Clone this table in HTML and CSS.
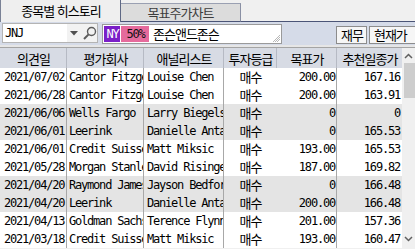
FILE: index.html
```html
<!DOCTYPE html>
<html lang="ko">
<head>
<meta charset="utf-8">
<title>종목별 히스토리</title>
<link rel="stylesheet" href="styles.css">
</head>
<body>
<div class="app">
  <div class="tabs">
    <div class="tab active">종목별 히스토리</div>
    <div class="tab inactive">목표주가차트</div>
    <div class="tab-fill"></div>
  </div>
  <div class="toolbar">
    <div class="combo">
      <span class="combo-input mono">JNJ</span>
      <span class="combo-btn arrow"><svg width="8" height="5" viewBox="0 0 8 5"><polygon points="0,0 8,0 4,4.5" fill="#505050"/></svg></span>
      <span class="combo-btn search"><svg width="15" height="15" viewBox="0 0 15 15"><circle cx="9.5" cy="5.5" r="4" fill="none" stroke="#5c5c5c" stroke-width="1.4"/><line x1="6.6" y1="8.4" x2="2" y2="13" stroke="#5c5c5c" stroke-width="2"/></svg></span>
    </div>
    <div class="name-box">
      <span class="badge ny mono">NY</span>
      <span class="badge pct mono">50%</span>
      <span class="name">존슨앤드존슨</span>
      <svg class="grip" width="8" height="8" viewBox="0 0 8 8"><line x1="8" y1="1" x2="1" y2="8" stroke="#b8b8b8"/><line x1="8" y1="3" x2="3" y2="8" stroke="#b8b8b8"/><line x1="8" y1="5" x2="5" y2="8" stroke="#b8b8b8"/></svg>
    </div>
    <div class="buttons">
      <span class="btn">재무</span>
      <span class="btn wide">현재가</span>
    </div>
  </div>
  <div class="grid-area">
    <div class="table">
      <div class="row head">
        <span class="c c1">의견일</span>
        <span class="c c2">평가회사</span>
        <span class="c c3">애널리스트</span>
        <span class="c c4">투자등급</span>
        <span class="c c5">목표가</span>
        <span class="c c6">추천일종가</span>
      </div>
      <div class="row">
        <span class="c c1 mono">2021/07/02</span><span class="c c2 mono">Cantor Fitzgerald</span><span class="c c3 mono">Louise Chen</span><span class="c c4">매수</span><span class="c c5 mono">200.00</span><span class="c c6 mono">167.16</span>
      </div>
      <div class="row">
        <span class="c c1 mono">2021/06/28</span><span class="c c2 mono">Cantor Fitzgerald</span><span class="c c3 mono">Louise Chen</span><span class="c c4">매수</span><span class="c c5 mono">200.00</span><span class="c c6 mono">163.91</span>
      </div>
      <div class="row alt">
        <span class="c c1 mono">2021/06/06</span><span class="c c2 mono">Wells Fargo</span><span class="c c3 mono">Larry Biegelsen</span><span class="c c4">매수</span><span class="c c5 mono">0</span><span class="c c6 mono">0</span>
      </div>
      <div class="row alt">
        <span class="c c1 mono">2021/06/01</span><span class="c c2 mono">Leerink</span><span class="c c3 mono">Danielle Antalffy</span><span class="c c4">매수</span><span class="c c5 mono">0</span><span class="c c6 mono">165.53</span>
      </div>
      <div class="row">
        <span class="c c1 mono">2021/06/01</span><span class="c c2 mono">Credit Suisse</span><span class="c c3 mono">Matt Miksic</span><span class="c c4">매수</span><span class="c c5 mono">193.00</span><span class="c c6 mono">165.53</span>
      </div>
      <div class="row">
        <span class="c c1 mono">2021/05/28</span><span class="c c2 mono">Morgan Stanley</span><span class="c c3 mono">David Risinger</span><span class="c c4">매수</span><span class="c c5 mono">187.00</span><span class="c c6 mono">169.82</span>
      </div>
      <div class="row alt">
        <span class="c c1 mono">2021/04/20</span><span class="c c2 mono">Raymond James</span><span class="c c3 mono">Jayson Bedford</span><span class="c c4">매수</span><span class="c c5 mono">0</span><span class="c c6 mono">166.48</span>
      </div>
      <div class="row alt">
        <span class="c c1 mono">2021/04/20</span><span class="c c2 mono">Leerink</span><span class="c c3 mono">Danielle Antalffy</span><span class="c c4">매수</span><span class="c c5 mono">200.00</span><span class="c c6 mono">166.48</span>
      </div>
      <div class="row">
        <span class="c c1 mono">2021/04/13</span><span class="c c2 mono">Goldman Sachs</span><span class="c c3 mono">Terence Flynn</span><span class="c c4">매수</span><span class="c c5 mono">201.00</span><span class="c c6 mono">157.36</span>
      </div>
      <div class="row">
        <span class="c c1 mono">2021/03/18</span><span class="c c2 mono">Credit Suisse</span><span class="c c3 mono">Matt Miksic</span><span class="c c4">매수</span><span class="c c5 mono">193.00</span><span class="c c6 mono">160.47</span>
      </div>
    </div>
    <div class="scrollbar">
      <span class="sb-arrow up"><svg width="9" height="6" viewBox="0 0 9 6"><polyline points="1,5 4.5,1.5 8,5" fill="none" stroke="#606060" stroke-width="1.5"/></svg></span>
      <span class="sb-thumb"></span>
      <span class="sb-track"></span>
      <span class="sb-arrow down"><svg width="9" height="6" viewBox="0 0 9 6"><polyline points="1,1 4.5,4.5 8,1" fill="none" stroke="#606060" stroke-width="1.5"/></svg></span>
    </div>
  </div>
</div>
</body>
</html>
```
FILE: styles.css
```css
* { box-sizing: border-box; }

html, body {
  margin: 0;
  padding: 0;
}

body {
  width: 415px;
  height: 249px;
  overflow: hidden;
  background: #f0f0f0;
  font-family: "Noto Sans CJK KR", sans-serif;
  font-size: 13px;
  letter-spacing: -1px;
  color: #000;
}

.mono {
  font-family: "DejaVu Sans Mono", "Noto Sans CJK KR", monospace;
  font-size: 12px;
  letter-spacing: -1.2px;
}

/* tabs */
.tabs {
  display: flex;
  align-items: flex-end;
  height: 22px;
}

.tab {
  flex: none;
  text-align: center;
  white-space: nowrap;
}

.tab.active {
  width: 121px;
  height: 22px;
  line-height: 21px;
  padding-left: 1px;
  background: #efefef;
  border-left: 1px solid #7a8296;
  border-right: 1px solid #5e6884;
}

.tab.inactive {
  width: 120px;
  height: 19px;
  line-height: 17px;
  background: #dcdcdc;
  color: #3c3c3c;
  border-top: 1px solid #9aa0b2;
  border-right: 1px solid #8a90a4;
  border-bottom: 1px solid #4b5577;
}

.tab-fill {
  flex: 1;
  height: 22px;
  border-bottom: 1px solid #4b5577;
}

/* toolbar */
.toolbar {
  display: flex;
  align-items: flex-start;
  height: 25px;
  padding: 1px 0 0 2px;
  background: #d5dbe8;
  border-bottom: 2px solid #e6e6e6;
  overflow: hidden;
}

.combo {
  display: flex;
  height: 20px;
  flex: none;
}

.combo-input {
  width: 65px;
  height: 20px;
  line-height: 19px;
  padding-left: 2px;
  background: #fff;
  border: 1px solid #b4b4b4;
  border-right: none;
}

.combo-btn {
  display: flex;
  align-items: center;
  justify-content: center;
  height: 20px;
  background: #f2f2f2;
  border-top: 1px solid #b4b4b4;
  border-bottom: 1px solid #b4b4b4;
}

.combo-btn.arrow {
  width: 14px;
  padding-top: 1px;
}

.combo-btn.search {
  width: 17px;
  border-right: 1px solid #b4b4b4;
}

.name-box {
  display: flex;
  align-items: center;
  position: relative;
  width: 180px;
  height: 20px;
  margin: 1px 0 0 4px;
  padding: 0 1px;
  background: #fff;
  border: 1px solid #9a9a9a;
  flex: none;
}

.badge {
  display: block;
  height: 16px;
  line-height: 16px;
  text-align: center;
}

.badge.ny {
  width: 16px;
  background: #7a1fc8;
  color: #fff;
  padding-left: 1px;
}

.badge.pct {
  width: 28px;
  margin-left: 1px;
  background: #e56a9c;
  color: #111;
  padding-left: 1px;
}

.name {
  margin-left: 4px;
  line-height: 16px;
  white-space: nowrap;
}

.grip {
  position: absolute;
  right: 1px;
  bottom: 1px;
}

.buttons {
  display: flex;
  gap: 2px;
  margin: 3px 0 0 54px;
  flex: none;
}

.btn {
  display: block;
  height: 18px;
  line-height: 16px;
  padding: 0 3px 0 4px;
  text-align: center;
  background: #f6f6f6;
  border: 1px solid #8c8c8c;
  white-space: nowrap;
}

.btn.wide {
  width: 54px;
  text-align: left;
}

/* grid */
.grid-area {
  display: flex;
  height: 202px;
  border-top: 1px solid #a4a4a4;
}

.table {
  width: 402px;
  flex: none;
}

.row {
  display: flex;
  height: 18px;
  line-height: 18px;
  background: #fff;
}

.row.alt {
  background: #e4e4e4;
}

.row.head {
  height: 20px;
  line-height: 21px;
  background: #d7dbe4;
}

.c {
  display: block;
  overflow: hidden;
  white-space: nowrap;
  border-right: 1px solid #a8a8a8;
}

.c1 { width: 67px; padding-left: 4px; }
.c2 { width: 77px; padding-left: 2px; }
.c3 { width: 80px; padding-left: 3px; }
.c4 { width: 53px; text-align: center; padding-left: 1px; border-right-color: transparent; }
.c5 { width: 60px; text-align: right; padding-right: 1px; }
.c6 { width: 65px; text-align: right; padding-right: 2px; border-right: none; }

.row.head .c {
  text-align: center;
  padding: 0 0 0 1px;
  border-right: 1px solid #b6bac4;
}

.row.head .c6 {
  border-right: none;
}

/* scrollbar */
.scrollbar {
  display: flex;
  flex-direction: column;
  width: 13px;
  flex: none;
  background: #f0f0f0;
}

.sb-arrow {
  display: flex;
  align-items: center;
  justify-content: center;
  flex: none;
}

.sb-arrow.up { height: 15px; }
.sb-arrow.down { height: 17px; padding-bottom: 3px; }

.sb-thumb {
  display: block;
  height: 35px;
  margin-left: 2px;
  background: #cdcdcd;
  flex: none;
}

.sb-track {
  flex: 1;
}
```
